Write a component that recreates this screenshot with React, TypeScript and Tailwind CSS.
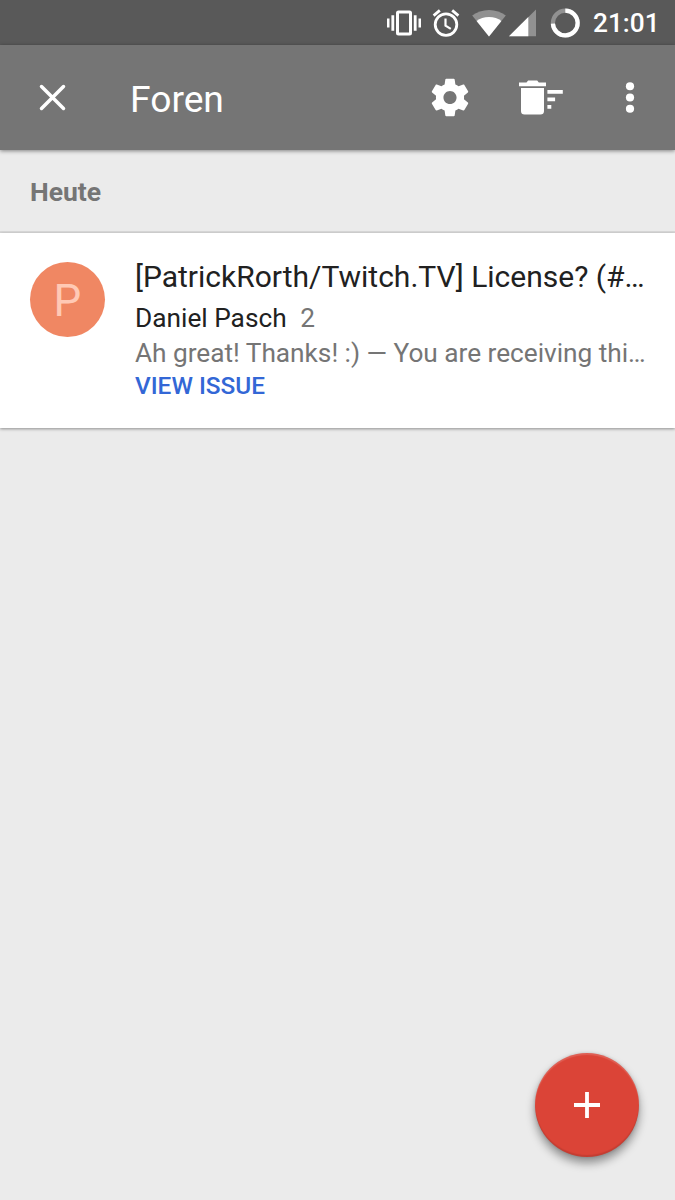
function VibrateIcon() {
  return (
    <svg width="34" height="28" viewBox="0 0 34 28" fill="#fff">
      <rect x="10.5" y="2.9" width="13" height="22.2" rx="1" fill="none" stroke="#fff" strokeWidth="3" />
      <path d="M0 9.5h2.5v9H0zM4.4 6.3h2.8v15.4H4.4zM26.8 6.3h2.8v15.4h-2.8zM31.5 9.5H34v9h-2.5z" />
    </svg>
  );
}

function AlarmIcon() {
  return (
    <svg width="28" height="28" viewBox="0 0 28 28" fill="none" stroke="#fff" strokeWidth="2.8">
      <circle cx="14" cy="15.6" r="10.8" />
      <path d="M1.6 6.6l6.2-5.2M26.4 6.6l-6.2-5.2" />
      <path d="M13.5 9.6v7l5.3 3.3" strokeWidth="2.2" />
    </svg>
  );
}

function WifiIcon() {
  return (
    <svg width="34" height="28" viewBox="0 0 34 28">
      <path d="M17 27.5L.2 6.6C4.8 3.1 10.6 1 17 1s12.2 2.1 16.8 5.6z" fill="#919191" />
      <path d="M17 27.5L4.6 12.1C7.9 9.6 12.1 8.1 17 8.1s9.1 1.5 12.4 4z" fill="#fff" />
    </svg>
  );
}

function SignalIcon() {
  return (
    <svg width="27" height="28" viewBox="0 0 27 28">
      <path d="M0 27.3L27 .5v26.8z" fill="#919191" />
      <path d="M0 27.3L19.3 8.1v19.2z" fill="#fff" />
    </svg>
  );
}

function BatteryIcon() {
  return (
    <svg width="30" height="30" viewBox="0 0 30 30" fill="none" strokeWidth="4.2">
      <circle cx="15.3" cy="15" r="12.4" stroke="#919191" />
      <path d="M15.3 2.6A12.4 12.4 0 1 1 2.9 15.6" stroke="#fff" />
    </svg>
  );
}

function CloseIcon() {
  return (
    <svg width="45" height="45" viewBox="0 0 45 45" stroke="#fff" strokeWidth="3.5" strokeLinecap="round">
      <path d="M11.5 11.5l22 22M33.5 11.5l-22 22" />
    </svg>
  );
}

function GearIcon() {
  return (
    <svg width="46" height="45" viewBox="0 0 24 24" fill="#fff">
      <path d="M19.43 12.98c.04-.32.07-.64.07-.98s-.03-.66-.07-.98l2.11-1.65c.19-.15.24-.42.12-.64l-2-3.46c-.12-.22-.39-.3-.61-.22l-2.49 1c-.52-.4-1.08-.73-1.69-.98l-.38-2.65C14.46 2.18 14.25 2 14 2h-4c-.25 0-.46.18-.49.42l-.38 2.65c-.61.25-1.17.59-1.69.98l-2.49-1c-.23-.09-.49 0-.61.22l-2 3.46c-.13.22-.07.49.12.64l2.11 1.65c-.04.32-.07.65-.07.98s.03.66.07.98l-2.11 1.65c-.19.15-.24.42-.12.64l2 3.46c.12.22.39.3.61.22l2.49-1c.52.4 1.08.73 1.69.98l.38 2.65c.03.24.24.42.49.42h4c.25 0 .46-.18.49-.42l.38-2.65c.61-.25 1.17-.59 1.69-.98l2.49 1c.23.09.49 0 .61-.22l2-3.46c.12-.22.07-.49-.12-.64l-2.11-1.65zM12 15.5c-1.93 0-3.5-1.57-3.5-3.5s1.57-3.5 3.5-3.5 3.5 1.57 3.5 3.5-1.57 3.5-3.5 3.5z" />
    </svg>
  );
}

function SweepIcon() {
  return (
    <svg width="46" height="45" viewBox="0 0 46 45" fill="#fff">
      <path d="M2 7.5h7.5L11.1 5.4h9.1l1.6 2.1H29v3.8H2z" />
      <path d="M4 13h23v23a3.6 3.6 0 0 1-3.6 3.6H7.6A3.6 3.6 0 0 1 4 36z" />
      <path d="M30.4 15h15.4v3.8H30.4zM30.4 22.5h7.7v3.7h-7.7zM30.4 30h3.9v3.8h-3.9z" />
    </svg>
  );
}

function MoreIcon() {
  return (
    <svg width="46" height="45" viewBox="0 0 46 45" fill="#fff">
      <circle cx="23" cy="11.25" r="4.1" />
      <circle cx="23" cy="22.5" r="4.1" />
      <circle cx="23" cy="33.75" r="4.1" />
    </svg>
  );
}

export default function App() {
  return (
    <div className="relative flex h-[1200px] w-[675px] flex-col overflow-hidden bg-[#ebebeb] font-[Roboto,sans-serif]">
      <div className="flex h-[45px] shrink-0 items-center justify-end bg-[#595959] pr-[15px] text-white">
        <VibrateIcon />
        <span className="ml-[11px] flex"><AlarmIcon /></span>
        <span className="ml-3 flex"><WifiIcon /></span>
        <span className="ml-[3px] flex"><SignalIcon /></span>
        <span className="ml-[14px] flex"><BatteryIcon /></span>
        <span className="ml-[13px] w-[67px] pt-[2px] text-[26.25px] leading-[45px] font-medium whitespace-nowrap">21:01</span>
      </div>

      <header className="z-10 flex h-[105px] shrink-0 items-center bg-[#757575] pr-[22px] pl-[30px] text-white shadow-[0_1px_4px_rgba(0,0,0,0.45)]">
        <button aria-label="Schließen"><CloseIcon /></button>
        <h1 className="ml-[55px] flex-1 pt-[2px] text-[37.2px] leading-[44px] font-normal">Foren</h1>
        <div className="flex items-center gap-[44px]">
          <button aria-label="Einstellungen"><GearIcon /></button>
          <button aria-label="Alle löschen"><SweepIcon /></button>
          <button aria-label="Mehr"><MoreIcon /></button>
        </div>
      </header>

      <h2 className="flex h-[83px] shrink-0 items-center border-b-2 border-[#dadada] pt-[2px] pl-[30px] text-[26.5px] font-bold text-[#757575]">Heute</h2>

      <article className="flex h-[195px] shrink-0 bg-white pt-[26px] pr-[20px] pl-[30px] shadow-[0_1px_3px_rgba(0,0,0,0.4)]">
        <div className="mt-[3px] flex size-[75px] shrink-0 items-center justify-center rounded-full bg-[#f08763] pt-[2px] text-[44px] font-normal text-[#ffc9b5]">P</div>
        <div className="ml-[30px] min-w-0 flex-1 whitespace-nowrap">
          <div className="text-[30px] leading-[35px] text-[#212121]">[PatrickRorth/Twitch.TV] License? (#…</div>
          <div className="mt-[7px] flex gap-[13.5px] text-[26.25px] leading-[34px] text-[#212121]">
            <span>Daniel Pasch</span>
            <span className="text-[#757575]">2</span>
          </div>
          <div className="mt-px text-[26.25px] leading-[34px] tracking-[-0.025px] text-[#757575]">Ah great! Thanks! :) — You are receiving thi…</div>
          <a className="block text-[24.375px] leading-[32px] font-medium text-[#3367d6]">VIEW ISSUE</a>
        </div>
      </article>

      <button
        aria-label="Hinzufügen"
        className="absolute right-[36px] bottom-[43px] flex size-[104px] items-center justify-center rounded-full bg-[#db4437] shadow-[0_6px_10px_rgba(0,0,0,0.4),0_0_3px_rgba(0,0,0,0.15),inset_0_2px_1px_rgba(255,255,255,0.15),inset_0_-2px_1px_rgba(0,0,0,0.1)]"
      >
        <svg width="44" height="44" viewBox="0 0 44 44" stroke="#fff" strokeWidth="3.8">
          <path d="M22 9v26M9 22h26" />
        </svg>
      </button>
    </div>
  );
}
